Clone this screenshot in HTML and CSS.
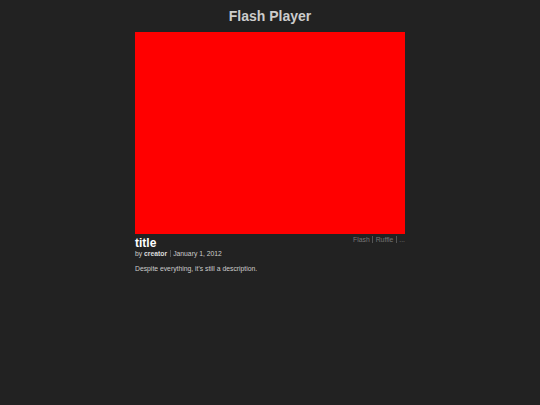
FILE: index.html
```html
<!DOCTYPE html>
<html>
<head>
<meta charset="utf-8">
<link rel="stylesheet" href="styles.css">
</head>
<body>
<div class="page">
  <h1 class="heading">Flash Player</h1>
  <div class="player">
    <div class="stage"></div>
    <div class="info">
      <div class="meta">
        <div class="title">title</div>
        <div class="byline">by <b>creator</b><span class="sep"></span>January 1, 2012</div>
      </div>
      <div class="links">Flash<span class="sep"></span>Ruffle<span class="sep"></span>...</div>
    </div>
    <p class="desc">Despite everything, it's still a description.</p>
  </div>
</div>
</body>
</html>
```
FILE: styles.css
```css
html, body {
  margin: 0;
  padding: 0;
  background: #222222;
}
body {
  font-family: "Liberation Sans", Arial, sans-serif;
  color: #cccccc;
}
.page {
  display: flex;
  flex-direction: column;
  align-items: center;
}
.heading {
  margin: 7px 0 0 0;
  height: 25px;
  font-size: 14px;
  line-height: 19px;
  font-weight: bold;
  color: #cccccc;
}
.player {
  width: 270px;
}
.stage {
  width: 270px;
  height: 202px;
  background: #ff0000;
}
.info {
  display: flex;
  justify-content: space-between;
  align-items: flex-start;
}
.title {
  font-size: 12px;
  font-weight: bold;
  color: #ffffff;
  line-height: 14px;
  margin-top: 2px;
}
.byline {
  font-size: 6.8px;
  line-height: 8px;
  color: #cccccc;
}
.byline b {
  color: #dddddd;
}
.sep {
  display: inline-block;
  width: 1px;
  height: 7px;
  background: #555;
  margin: 0 2.5px;
  vertical-align: -1px;
}
.links {
  font-size: 6.8px;
  line-height: 9px;
  color: #777777;
  margin-top: 1px;
}
.desc {
  margin: 6px 0 0 0;
  font-size: 6.8px;
  line-height: 9px;
  color: #cccccc;
}
```
